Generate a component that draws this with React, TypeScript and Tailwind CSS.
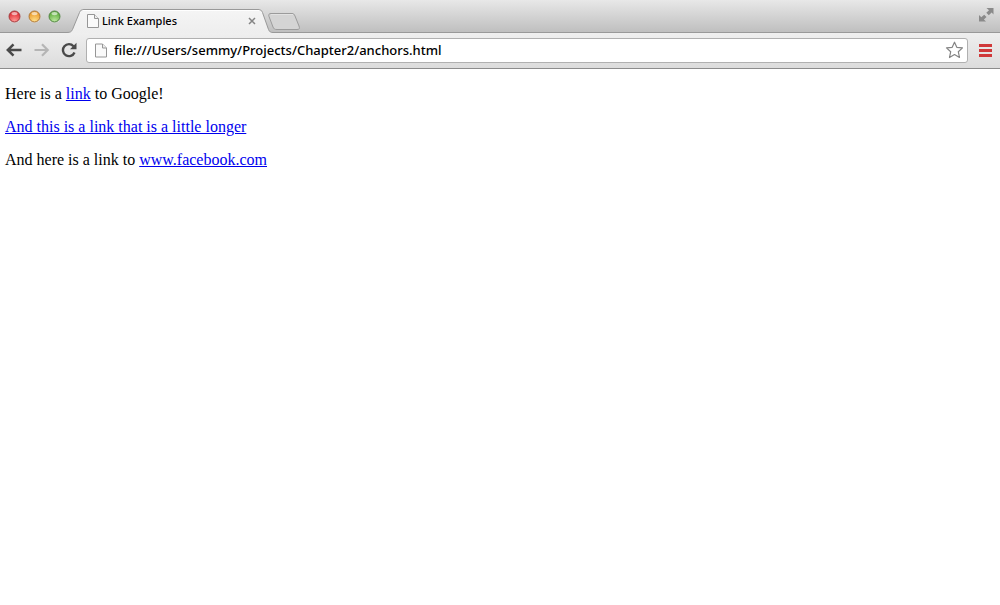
import React from "react";

function PageIcon({ className }: { className: string }) {
  return (
    <svg className={className} viewBox="0 0 12 14" fill="none" aria-hidden="true">
      <path d="M.5.5H7.5L11.5 4.5V13.5H.5Z" fill="#fafafa" stroke="#969696" />
      <path d="M7.5.5V4.5H11.5" fill="#eee" stroke="#969696" />
    </svg>
  );
}

const lights = [
  { name: "Close", rim: "#9c3b3d", base: "#e3353b", glow: "#ff9a96" },
  { name: "Minimize", rim: "#a8743a", base: "#eda030", glow: "#ffe08c" },
  { name: "Zoom", rim: "#4f7f42", base: "#66b245", glow: "#bde8a0" },
];

function WindowButtons() {
  return (
    <div className="flex gap-[7px] pt-[10px] pl-2">
      {lights.map((l) => (
        <button key={l.name} aria-label={l.name} className="block size-[13px]">
          <svg viewBox="0 0 13 13" className="size-[13px]">
            <defs>
              <radialGradient id={l.name} cx=".5" cy=".9" r=".7">
                <stop offset="0" stopColor={l.glow} />
                <stop offset="1" stopColor={l.base} />
              </radialGradient>
            </defs>
            <circle cx="6.5" cy="7" r="6" fill="#fff" opacity=".5" />
            <circle cx="6.5" cy="6.5" r="5.5" fill={`url(#${l.name})`} stroke={l.rim} />
            <ellipse cx="6.5" cy="3.6" rx="3" ry="1.7" fill="#fff" opacity=".6" />
          </svg>
        </button>
      ))}
    </div>
  );
}

function Tab() {
  return (
    <div className="relative mt-[9px] ml-[6px] flex h-6 w-[206px] items-center pr-[17px] pl-5">
      <svg className="absolute inset-0 h-6 w-[206px]" viewBox="0 0 206 24" aria-hidden="true">
        <defs>
          <linearGradient id="tabFill" x1="0" y1="0" x2="0" y2="1">
            <stop offset="0" stopColor="#f5f5f5" />
            <stop offset="1" stopColor="#eeeeee" />
          </linearGradient>
        </defs>
        <path
          d="M0 24V23.500C3.500 23.500 4.600 22.500 5.500 20.500L12.500 3.500C13.500 1.200 14.500 .5 17 .5H191C193.500 .5 194.500 1.200 195.500 3.500L201.500 20.500C202.500 22.800 203.500 23.500 206 23.500V24Z"
          fill="url(#tabFill)"
        />
        <path
          d="M0 23.500C3.500 23.500 4.600 22.500 5.500 20.500L12.500 3.500C13.500 1.200 14.500 .5 17 .5H191C193.500 .5 194.500 1.200 195.500 3.500L201.500 20.500C202.500 22.800 203.500 23.500 206 23.500"
          fill="none"
          stroke="#999"
        />
        <path d="M16 1.500H192" stroke="#fff" />
      </svg>
      <PageIcon className="relative h-[14px] w-3" />
      <span className="relative ml-[3px] flex-1 font-['Noto_Sans',sans-serif] text-[11px] leading-4 font-medium text-black">
        Link Examples
      </span>
      <button aria-label="Close tab" className="relative block size-[8px]">
        <svg viewBox="0 0 8 8" className="size-[8px]">
          <path d="M1 1L7 7M7 1L1 7" stroke="#858585" strokeWidth="1.500" />
        </svg>
      </button>
    </div>
  );
}

export default function App() {
  return (
    <div className="min-h-screen bg-white">
      <header>
        <div className="flex h-[33px] items-start border-b border-[#999] bg-linear-to-b from-[#e8e8e8] to-[#bfbfbf]">
          <WindowButtons />
          <Tab />
          <button aria-label="New tab" className="mt-[13px] -ml-[5px] block h-[17px] w-8">
            <svg viewBox="0 0 32 17" className="h-[17px] w-8">
              <path
                d="M3 .5H24C25.500 .5 26.200 1 27 3L31 13C31.900 15.300 31.500 16.500 29 16.500H9C6.500 16.500 5.800 15.800 5 14L1 3.500C.3 1.500 1 .5 3 .5Z"
                fill="#d4d4d4"
                stroke="#9b9b9b"
              />
              <path d="M3 1.500H25" stroke="#e2e2e2" />
            </svg>
          </button>
          <button aria-label="Full screen" className="mt-2 mr-[6px] ml-auto block size-[15px]">
            <svg viewBox="0 0 15 15" className="size-[15px]" fill="#8a8a8a">
              <path d="M7.500 0H14.500V6.500L12.600 4.600L9.800 7.200L7.300 4.800L10 2.200Z" />
              <path d="M0 7V13.500H7L4.900 11.500L7.500 9L5.200 6.800L2.300 9.200Z" />
            </svg>
          </button>
        </div>
        <div className="flex h-9 items-center border-b border-[#8c8c8c] bg-linear-to-b from-[#efefef] to-[#dcdcdc] pr-2 pb-px pl-[6px]">
          <button aria-label="Back" className="block h-4 w-4">
            <svg viewBox="0 0 16 16" className="size-4" fill="none" stroke="#494949" strokeWidth="2.500">
              <path d="M2 8H15.500M7.500 2.300L1.800 8L7.500 13.700" />
            </svg>
          </button>
          <button aria-label="Forward" className="ml-3 block h-4 w-4">
            <svg viewBox="0 0 16 16" className="size-4" fill="none" stroke="#b5b5b5" strokeWidth="2.200">
              <path d="M.5 8H14M8 2.300L13.700 8L8 13.700" />
            </svg>
          </button>
          <button aria-label="Reload" className="ml-[11px] block h-4 w-4">
            <svg viewBox="0 0 16 16" className="size-4">
              <path d="M12.500 4.200A6 6 0 1 0 13.500 10.500" fill="none" stroke="#494949" strokeWidth="2.400" />
              <path d="M15.500 .8V7.300H9Z" fill="#494949" />
            </svg>
          </button>
          <div className="ml-[9px] flex h-[25px] flex-1 items-center rounded-[3px] border border-[#b0b0b0] bg-white pr-1 pl-2">
            <PageIcon className="h-[15px] w-3" />
            <input
              aria-label="Address"
              defaultValue="file:///Users/semmy/Projects/Chapter2/anchors.html"
              className="ml-[7px] min-w-0 flex-1 bg-transparent font-['Noto_Sans',sans-serif] text-[13px] leading-5 font-medium text-black outline-none"
            />
            <button aria-label="Bookmark" className="block size-[18px]">
              <svg viewBox="0 0 18 18" className="size-[18px]">
                <path
                  d="M9.500 1.200L11.800 6.300L17.500 6.900L13.300 10.700L14.500 16.500L9.500 13.600L4.500 16.500L5.700 10.700L1.500 6.900L7.200 6.300Z"
                  fill="#fff"
                  stroke="#848484"
                  strokeWidth="1.200"
                  strokeLinejoin="round"
                />
              </svg>
            </button>
          </div>
          <button aria-label="Menu" className="ml-[11px] block h-[13px] w-[13px]">
            <svg viewBox="0 0 13 13" className="size-[13px]" fill="#d0393a">
              <path d="M0 0H13V3H0ZM0 5H13V8H0ZM0 10H13V13H0Z" />
            </svg>
          </button>
        </div>
      </header>
      <main className="flex flex-col gap-4 px-[5px] pt-4 font-['Liberation_Serif',serif] text-[16px] leading-[17px] text-black">
        <p>
          Here is a <a href="#google" className="text-[#0000ee] underline">link</a> to Google!
        </p>
        <p>
          <a href="#longer" className="text-[#0000ee] underline">And this is a link that is a little longer</a>
        </p>
        <p>
          And here is a link to <a href="#facebook" className="text-[#0000ee] underline">www.facebook.com</a>
        </p>
      </main>
    </div>
  );
}
